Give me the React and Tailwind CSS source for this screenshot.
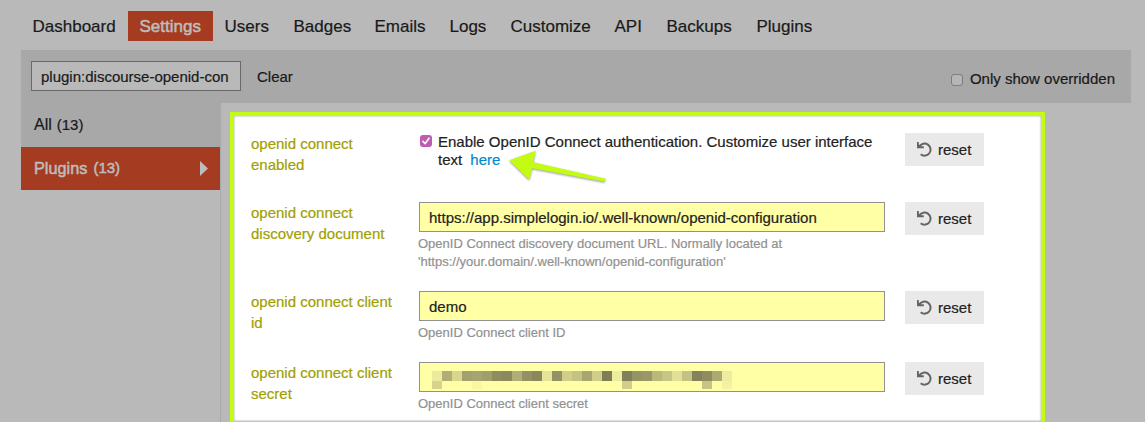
import React from 'react';

const tabs = [
  { name: 'Dashboard', w: 'w-[107px]' },
  { name: 'Settings', w: 'w-[85px]', active: true },
  { name: 'Users', w: 'w-[69px]' },
  { name: 'Badges', w: 'w-[81px]' },
  { name: 'Emails', w: 'w-[75px]' },
  { name: 'Logs', w: 'w-[61px]' },
  { name: 'Customize', w: 'w-[104px]' },
  { name: 'API', w: 'w-[52px]' },
  { name: 'Backups', w: 'w-[90px]' },
  { name: 'Plugins', w: 'w-[80px]' },
];

const maskTop = [
  '#ecea9c', '#b0ae74', '#d8d68c', '#a2a06c', '#a6a470', '#a09e6a', '#8f8d60', '#8b895d', '#b0ae76', '#949264',
  '#8a885c', '#e6e498', '#949262', '#d0ce88', '#c4c280', '#a8a670', '#d0ce88', '#7f7d56', '#eeec9e', '#828058',
  '#969464', '#9a9866', '#bab87a', '#c8c684', '#e2e096', '#c4c282', '#84825a', '#8e8c60', '#acaa70', '#eeec9f',
];
const maskBottom = { 0: '#d6d48c', 4: '#f9f7a4', 19: '#d0ce88', 27: '#c6c482', 29: '#f4f2a2' };

function ResetButton() {
  return (
    <button className="ml-5 flex h-[33px] w-[79px] shrink-0 items-center bg-[#e9e9e9] pl-3 text-[15px] text-[#222]">
      <svg className="mr-1.5 h-[15px] w-[15px] shrink-0" viewBox="0 0 15 15" fill="none">
        <path d="M2.4 4.6A6 6 0 1 1 3.7 12.2" stroke="#646464" strokeWidth="2" />
        <path d="M0 0H1.8V2.2L3.6 4.2H6.8V6.2H0Z" fill="#646464" />
      </svg>
      <span className="pt-0.5">reset</span>
    </button>
  );
}

function Setting({ label, height, children }) {
  return (
    <div className={`flex items-start ${height}`}>
      <div className="w-[168px] shrink-0 text-[15px] leading-[21px] text-[#a0a000]">
        {label.map((line) => (
          <div key={line}>{line}</div>
        ))}
      </div>
      <div className="w-[466px] shrink-0">{children}</div>
      <ResetButton />
    </div>
  );
}

function Field({ value }) {
  return (
    <input
      readOnly
      value={value}
      className="block h-[30px] w-full border border-[#919191] bg-[#ffffa6] px-[9px] text-[15px] text-[#222] outline-none"
    />
  );
}

function Hint({ children }) {
  return <div className="-ml-px pt-[3px] text-[13px] leading-[18px] text-[#919191]">{children}</div>;
}

function MaskedField() {
  return (
    <div className="flex h-[30px] flex-col border border-[#919191] bg-[#ffffa6] pt-2 pl-3">
      <div className="flex">
        {maskTop.map((c, i) => (
          <div key={i} className="h-2.5 w-2.5" style={{ backgroundColor: c }} />
        ))}
      </div>
      <div className="flex">
        {maskTop.map((_, i) => (
          <div key={i} className="h-2 w-2.5" style={{ backgroundColor: maskBottom[i] }} />
        ))}
      </div>
    </div>
  );
}

export default function App() {
  return (
    <div className="relative h-[422px] w-[1145px] overflow-hidden bg-[#b9b9b9] pt-[11px] pl-[21px] font-['Liberation_Sans',Arial,sans-serif] text-[#191919] [-webkit-text-stroke:0.2px]">
      <nav className="flex h-[39px] items-start text-[17px]">
        {tabs.map((t) => (
          <a
            key={t.name}
            className={`flex h-[30px] shrink-0 items-center pt-0.5 pl-[11.5px] ${t.w} ${t.active ? 'bg-[#a53c22] text-[#bdbdbd] [-webkit-text-stroke:0.5px_#bdbdbd]' : ''}`}
          >
            {t.name}
          </a>
        ))}
      </nav>

      <div className="flex h-[53px] w-[1110px] items-start bg-[#a8a8a8] px-2.5 pt-[11px] text-[15px]">
        <input
          readOnly
          value="plugin:discourse-openid-connect"
          className="h-[30px] w-[210px] border border-[#696969] bg-[#b9b9b9] pr-[11px] pl-[9px] text-[15px] text-[#191919] outline-none"
        />
        <span className="pt-[5px] pl-4 leading-[21px]">Clear</span>
        <label className="mt-[7px] mr-[6px] ml-auto flex items-center leading-[21px]">
          <span className="mt-0.5 mr-[7px] h-3 w-3 rounded-[3px] border border-[#7c7c7c] bg-[#b6b6b6]" />
          Only show overridden
        </label>
      </div>

      <div className="flex">
        <div className="h-[319px] w-[200px] shrink-0 border-r border-[#a8a8a8]">
          <div className="flex h-[44px] w-[200px] items-center bg-[#a8a8a8] pl-[13px] text-[16px]">
            All <span className="ml-[5px] text-[15px]">(13)</span>
          </div>
          <div className="flex h-[43px] items-center bg-[#a53c22] pl-[13px] text-[16.3px] text-[#bdbdbd] [-webkit-text-stroke:0.5px_#bdbdbd]">
            Plugins <span className="ml-1.5 text-[15px]">(13)</span>
            <svg className="mr-3 ml-auto h-[15px] w-2" viewBox="0 0 8 15">
              <path d="M0 0L8 7.5L0 15Z" fill="#bdbdbd" />
            </svg>
          </div>
        </div>

        <div className="mt-[9px] ml-[9px] h-[310px] w-[815px] shrink-0 border-x-4 border-t-4 border-[#c3fb14] bg-[#c3fb14]">
          <div className="h-[306px] border-b border-[#c4c4c4] bg-white pt-[17px] pl-[17px] shadow-[inset_0_0_2px_#8c8c8c]">
            <Setting label={['openid connect', 'enabled']} height="h-[69px]">
              <div className="flex text-[15px] leading-[18px] text-[#222]">
                <span className="mt-0.5 mr-1.5 ml-px flex h-3 w-3 shrink-0 items-center justify-center rounded-[3px] bg-[#bd5cb0]">
                  <svg className="h-3 w-3" viewBox="0 0 12 12" fill="none">
                    <path d="M3 6.4L5.1 8.7L9 3.2" stroke="white" strokeWidth="1.6" strokeLinecap="round" strokeLinejoin="round" />
                  </svg>
                </span>
                <div className="whitespace-nowrap">
                  <div>Enable OpenID Connect authentication. Customize user interface</div>
                  <div>
                    text <a className="ml-1 text-[#0088cc]">here</a>
                  </div>
                </div>
              </div>
            </Setting>
            <Setting label={['openid connect', 'discovery document']} height="h-[89px]">
              <Field value="https://app.simplelogin.io/.well-known/openid-configuration" />
              <Hint>
                OpenID Connect discovery document URL. Normally located at
                <br />
                'https://your.domain/.well-known/openid-configuration'
              </Hint>
            </Setting>
            <Setting label={['openid connect client', 'id']} height="h-[71px]">
              <Field value="demo" />
              <Hint>OpenID Connect client ID</Hint>
            </Setting>
            <Setting label={['openid connect client', 'secret']} height="h-[59px]">
              <MaskedField />
              <Hint>OpenID Connect client secret</Hint>
            </Setting>
          </div>
        </div>
      </div>

      <svg className="absolute top-[145px] left-[505px] h-[42px] w-[106px] drop-shadow-[0_1px_1px_rgba(0,0,0,0.4)]" viewBox="505 145 106 42">
        <path d="M509.3 160.3L535.7 150.7L533.2 162.3L605.5 178.7L604.7 181.7L532 168.3L529.3 179.7Z" fill="#c3fb14" />
      </svg>
    </div>
  );
}
